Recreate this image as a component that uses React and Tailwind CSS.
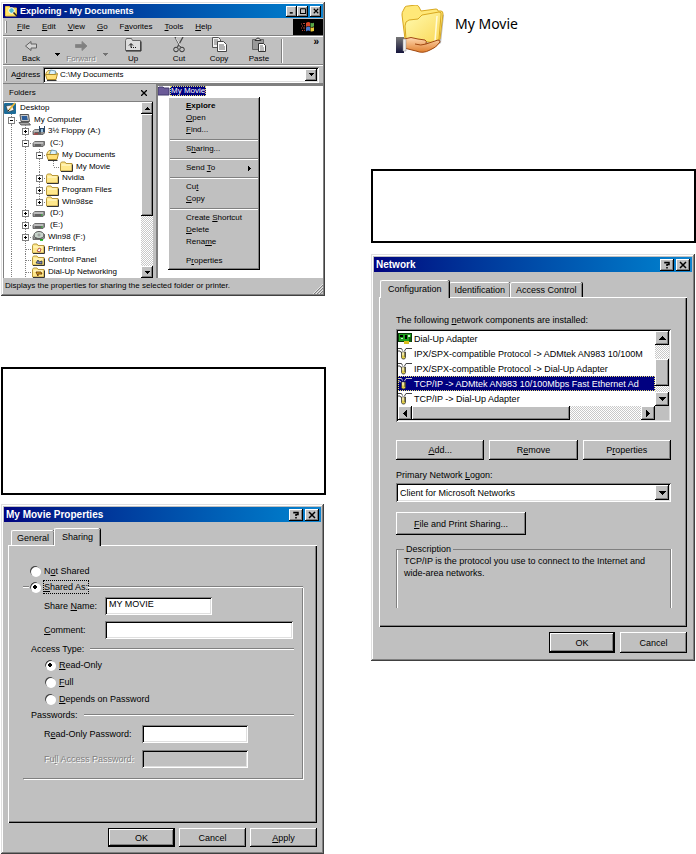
import { clsx } from 'clsx';

const raised = 'bg-[#c0c0c0] shadow-[inset_-1px_-1px_0_#000,inset_1px_1px_0_#fff,inset_-2px_-2px_0_#808080]';
const sunken = 'shadow-[inset_1px_1px_0_#808080,inset_-1px_-1px_0_#fff,inset_2px_2px_0_#000,inset_-2px_-2px_0_#dfdfdf]';
const checker = 'bg-[conic-gradient(#fff_25%,#c8c8c8_0_50%,#fff_0_75%,#c8c8c8_0)] bg-[length:2px_2px]';

// "&File" -> underlined F
function Mnemonic({ text }) {
  const i = text.indexOf('&');
  if (i < 0) return text;
  return (
    <>
      {text.slice(0, i)}
      <span className="underline">{text[i + 1]}</span>
      {text.slice(i + 2)}
    </>
  );
}

const arrowPaths = {
  up: 'M3 0h1v1h1v1h1v1h1v1H0V3h1V2h1V1h1z',
  down: 'M0 0h7v1H6v1H5v1H4v1H3V3H2V2H1V1H0z',
  left: 'M3 0h1v7H3V6H2V5H1V4H0V3h1V2h1V1h1z',
  right: 'M0 0h1v1h1v1h1v1h1v1H3v1H2v1H1v1H0z',
};

function Arrow({ dir = 'down' }) {
  const flat = dir === 'up' || dir === 'down';
  return (
    <svg width={flat ? 7 : 4} height={flat ? 4 : 7} shapeRendering="crispEdges" aria-hidden="true">
      <path d={arrowPaths[dir]} />
    </svg>
  );
}

function SmallArrow({ dir = 'down' }) {
  return (
    <svg width="5" height="5" viewBox="0 0 5 5" shapeRendering="crispEdges" aria-hidden="true">
      {dir === 'down' && <path d="M0 1h5v1H4v1H3v1H2V3H1V2H0z" />}
      {dir === 'up' && <path d="M2 1h1v1h1v1h1v1H0V3h1V2h1z" />}
      {dir === 'right' && <path d="M1 0h1v1h1v1h1v1H3v1H2v1H1z" />}
    </svg>
  );
}

function ScrollButton({ dir, small, className }) {
  return (
    <button type="button" aria-label={`Scroll ${dir}`} className={clsx('flex shrink-0 items-center justify-center', raised, className)}>
      {small ? <SmallArrow dir={dir} /> : <Arrow dir={dir} />}
    </button>
  );
}

function CaptionButton({ label, small, children }) {
  return (
    <button type="button" aria-label={label} className={clsx('flex items-center justify-center', raised, small ? 'size-[11px]' : 'h-3 w-3.5')}>
      <svg width={small ? 6 : 8} height={small ? 6 : 8} viewBox="0 0 8 8" fill="none" stroke="#000" aria-hidden="true">
        {children}
      </svg>
    </button>
  );
}

const closeGlyph = <path d="M1 1l6 6M7 1l-6 6" strokeWidth="1.5" />;

function DialogTitle({ children }) {
  return (
    <header className="flex h-[15px] items-center bg-linear-to-r from-[#000080] to-[#1084d0] px-0.5">
      <h2 className="flex-1 text-[10px] leading-none font-bold text-white">{children}</h2>
      <div className="flex gap-0.5">
        <CaptionButton label="Help">
          <path d="M2 2.500V1.500h4v2H4v1.500M4 6v1.500" strokeWidth="1.5" />
        </CaptionButton>
        <CaptionButton label="Close">{closeGlyph}</CaptionButton>
      </div>
    </header>
  );
}

function Button({ children, primary, className }) {
  return (
    <button type="button" className={clsx('flex items-center justify-center', raised, primary && 'border border-black', className)}>
      <span>
        <Mnemonic text={children} />
      </span>
    </button>
  );
}

function Tab({ children, active }) {
  return (
    <button
      type="button"
      role="tab"
      aria-selected={!!active}
      className={clsx(
        'rounded-t-xs border-t border-l border-white bg-[#c0c0c0] shadow-[inset_-1px_0_0_#808080,1px_0_0_#000]',
        active ? 'relative z-10 -mb-px h-[18px] px-[7px] pb-0.5' : 'h-[15px] px-[5px]',
      )}
    >
      {children}
    </button>
  );
}

const windowFrame =
  'bg-[#c0c0c0] shadow-[inset_-1px_-1px_0_#404040,inset_1px_1px_0_#dfdfdf,inset_-2px_-2px_0_#808080,inset_2px_2px_0_#fff]';
const tabPanel = 'border-t border-l border-white shadow-[inset_-1px_-1px_0_#000,inset_-2px_-2px_0_#808080]';

/* ---------- icons ---------- */

function FolderIcon({ mark }) {
  return (
    <svg width="13" height="11" viewBox="0 0 13 11" aria-hidden="true">
      <path d="M.5 2.500l1-1.500h3.500l1 1.500h6V10H.5z" fill="#ffe88c" stroke="#b8983c" />
      <path d="M1.500 4h9" stroke="#fffbd8" />
      <path d="M1 10.500h11.500V3.500" fill="none" stroke="#333" />
      {mark}
    </svg>
  );
}

function OpenFolderIcon() {
  return (
    <svg width="13" height="12" viewBox="0 0 13 12" aria-hidden="true">
      <path d="M1 4l2-2.500h3L7 3h4v3H1z" fill="#ffe88c" stroke="#b8983c" />
      <path d="M4 5l1.500-4 5 1-.5 4" fill="#d8f0fc" stroke="#5a8aa8" strokeWidth=".8" />
      <path d="M.5 5.500h10l2-1-1.500 6H2z" fill="#ffe078" stroke="#b08c28" />
      <path d="M2 11.500h9.500" stroke="#333" />
    </svg>
  );
}

function DriveIcon({ kind }) {
  return (
    <svg width="13" height="11" viewBox="0 0 13 11" aria-hidden="true">
      <path d="M1 5l2-1.500h9.500V7l-1.500 1.500H1z" fill="#909090" stroke="#555" strokeWidth=".8" />
      <path d="M1.500 5h9.500" stroke="#e8e8e8" />
      <path d="M3 7h6" stroke="#333" />
      {kind === 'hard' && <path d="M9 7h1.500" stroke="#0a0" />}
      {kind === 'floppy' && (
        <>
          <rect x="7" y="0" width="6" height="6" fill="#2c4868" />
          <rect x="8" y="0" width="4" height="2" fill="#fff" />
          <rect x="9" y="3" width="2" height="3" fill="#9cc4e0" />
          <path d="M2 8h4" stroke="#c33" />
        </>
      )}
      {kind === 'cd' && (
        <>
          <ellipse cx="7" cy="4" rx="5" ry="3.500" fill="#c8d4cc" stroke="#555" />
          <circle cx="7" cy="4" r="1" fill="#fff" stroke="#555" strokeWidth=".6" />
          <path d="M8 9h3" stroke="#0a0" strokeWidth="1.500" />
        </>
      )}
    </svg>
  );
}

function ComputerIcon() {
  return (
    <svg width="13" height="12" viewBox="0 0 13 12" aria-hidden="true">
      <path d="M2 .5h8.500l1 7H3z" fill="#c8c8c8" stroke="#555" />
      <path d="M3.500 2h5.500l.8 4H4.200z" fill="#2c5c98" />
      <path d="M1 8.500h9.500l2 2.500H3z" fill="#a8a8a8" stroke="#444" strokeWidth=".8" />
    </svg>
  );
}

function DesktopIcon() {
  return (
    <svg width="13" height="12" viewBox="0 0 13 12" aria-hidden="true">
      <rect y="1" width="12" height="11" rx="1" fill="#1c6c98" />
      <path d="M2 4l6-1 2 5-6 2z" fill="#f4f4f4" stroke="#222" strokeWidth=".5" />
      <path d="M5 8l6-7" stroke="#e8b838" strokeWidth="1.800" />
      <path d="M4 9l1.500-1.500" stroke="#222" />
    </svg>
  );
}

function ExploringIcon() {
  return (
    <svg width="13" height="12" viewBox="0 0 13 12" aria-hidden="true">
      <path d="M.5 1.500h4l1 1.500h6v8H.5z" fill="#ffe468" stroke="#e8c040" />
      <circle cx="6.500" cy="5.500" r="2.800" fill="#58b8c8" stroke="#fff" />
      <path d="M8.500 7.500l3.500 3.500" stroke="#222" strokeWidth="1.500" />
    </svg>
  );
}

function WindowsFlag() {
  return (
    <svg width="14" height="12" viewBox="0 0 14 12" aria-hidden="true">
      <path d="M5 2q2-1.500 4-.5V5.500q-2-1-4 .5z" fill="#d84828" />
      <path d="M9.500 1.800q1.500.7 3.500 0V5.500q-2 .8-3.500.2z" fill="#58a848" />
      <path d="M5 6.500q2-1.500 4-.5v4q-2-1-4 .5z" fill="#4878c8" />
      <path d="M9.500 6.300q1.500.7 3.500 0V10q-2 .8-3.500.2z" fill="#e8c838" />
      <path d="M0 3h1M2 2.500h2M1 5h1M3 4.800h1M0 7h1M2 7h2M1 9.500h1M3 9.300h1" stroke="#b04838" />
    </svg>
  );
}

const toolIcons = {
  Back: <path d="M4.500 9L10 4.500V7h5.500v4H10v2.500z" fill="#d4d4d4" stroke="#606060" />,
  Forward: <path d="M16 9l-5-4.500V7.500H4.500v3H11v3z" fill="#808080" stroke="#888" />,
  Up: (
    <>
      <path d="M2.500 3.500l1-2h5l1 2h8v10h-15z" fill="#ddd" stroke="#666" />
      <path d="M3 14h15V4.500" fill="none" stroke="#222" />
      <path d="M6 8.500l2-2 2 2M8 7v3.500h1M10 10.500h1M12 10.500h1" fill="none" stroke="#111" />
    </>
  ),
  Cut: (
    <>
      <path d="M6 0l5.500 10M14 0L8.500 10" stroke="#444" strokeWidth="1.300" fill="none" />
      <path d="M7 1l4.500 8" stroke="#eee" />
      <circle cx="7" cy="12.500" r="2.300" fill="none" stroke="#333" />
      <circle cx="13" cy="12.500" r="2.300" fill="none" stroke="#333" />
    </>
  ),
  Copy: (
    <>
      <path d="M3.500.5h6l2 2v8h-8z" fill="#f0f0f0" stroke="#555" />
      <path d="M5 3h4M5 5h5M5 7h4" stroke="#777" />
      <path d="M8.500 4.500h6l3 3v7h-9z" fill="#fff" stroke="#444" />
      <path d="M10 8h5M10 10h6M10 12h6" stroke="#666" />
    </>
  ),
  Paste: (
    <>
      <path d="M3.500 2.500h11v10h-11z" fill="#999" stroke="#666" />
      <path d="M6 3.500q3-5 6 0z" fill="#ddd" stroke="#333" />
      <path d="M9.500 6.500h5l2 2v6h-7z" fill="#fff" stroke="#333" />
      <path d="M11 9h3M11 11h4M11 13h4" stroke="#777" />
    </>
  ),
};

function AdapterIcon() {
  return (
    <svg width="14" height="13" viewBox="0 0 14 13" shapeRendering="crispEdges" aria-hidden="true">
      <rect y="1" width="14" height="9" fill="#083c08" />
      <rect x="1" y="2" width="12" height="7" fill="#20a020" />
      <path d="M2 3h3v2H2zM7 3h2v4H7z" fill="#000" />
      <path d="M3 6h2v1H3zM10 3h2v2h-2z" fill="#c8f0c8" />
      <path d="M6 9h5v3H6z" fill="#d8c020" />
      <path d="M11 5h2v5h-2z" fill="#106010" />
    </svg>
  );
}

function ProtocolIcon({ light }) {
  const wire = light ? '#c8c8c8' : '#444';
  return (
    <svg width="14" height="13" viewBox="0 0 14 13" aria-hidden="true">
      <path d="M0 1.500h3.500l1 2M14 1.500H8L6.500 4M0 4h2l1 1.500" fill="none" stroke={wire} />
      <path d="M3.500 5h4v5.500l-1 1.500h-2l-1-1.500z" fill="#e0cc48" stroke="#333" strokeWidth=".8" />
      <path d="M5 5v3.500" stroke="#fff" />
      <path d="M7 5v5" stroke="#444" />
    </svg>
  );
}

function SharedFolderIcon() {
  return (
    <svg width="50" height="48" viewBox="0 0 50 48" aria-hidden="true">
      <defs>
        <linearGradient id="folder" x1="0" y1="0" x2="1" y2="1">
          <stop offset="0" stopColor="#fffbb0" />
          <stop offset="1" stopColor="#fad858" />
        </linearGradient>
        <linearGradient id="hand" x1="0" y1="0" x2="0" y2="1">
          <stop offset="0" stopColor="#ffd8b0" />
          <stop offset="1" stopColor="#e08030" />
        </linearGradient>
        <linearGradient id="cuff" x1="0" y1="0" x2="0" y2="1">
          <stop offset="0" stopColor="#777" />
          <stop offset="1" stopColor="#15153c" />
        </linearGradient>
      </defs>
      <path d="M9 34L7 8l3-6 11-1 5 5 15-1 7 4-3 28-7 4z" fill="#555" opacity=".4" transform="translate(1 1)" />
      <path d="M10 34L7 10q0-3 1-4l2-4q1-1 3-1l8-1q2 0 3 2l2 4 15-2q2 0 2 2l3 0q2 0 2 3l-3 25-4 2z" fill="#ffe878" stroke="#d8a820" />
      <path d="M11 34l-1-13q0-5 4-6l9-1 4-4 17-3q3 0 2 3l-2 24q0 4-3 4z" fill="url(#folder)" stroke="#d8a820" />
      <path d="M42 11l-2 25" stroke="#fffbd8" strokeWidth="1.500" />
      <path d="M9 34q7-3 14 0l7 1q2 1 1 4l12-4q2 0 2 2-4 6-10 8-7 4-14 1l-12-3z" fill="url(#hand)" stroke="#a04810" />
      <path d="M20 39q6 2 11 0" fill="none" stroke="#a04810" />
      <path d="M1 32h8v16H1z" fill="url(#cuff)" />
      <path d="M8 34h3v12H8z" fill="#eee" stroke="#888" strokeWidth=".5" />
    </svg>
  );
}

/* ---------- explorer ---------- */

const printerMark = <path d="M5 8l2-3 2 1-1 3z" fill="#fff" stroke="#a33" strokeWidth=".8" />;
const panelMark = <path d="M4 8l2-3 1 2 3-1v3z" fill="#88b" stroke="#234" strokeWidth=".8" />;
const dialupMark = <path d="M4 5h5l1 2H6v2z" fill="#e0b020" stroke="#520" strokeWidth=".8" />;

// guides: one char per indent cell. | line, + closed, - open, x last closed, T branch, L last branch
const tree = [
  { name: 'Desktop', guides: '', icon: <DesktopIcon /> },
  { name: 'My Computer', guides: '-', icon: <ComputerIcon /> },
  { name: '3½ Floppy (A:)', guides: '|+', icon: <DriveIcon kind="floppy" /> },
  { name: '(C:)', guides: '|-', icon: <DriveIcon />, wide: true },
  { name: 'My Documents', guides: '||-', icon: <OpenFolderIcon /> },
  { name: 'My Movie', guides: '|||L', icon: <FolderIcon /> },
  { name: 'Nvidia', guides: '||+', icon: <FolderIcon /> },
  { name: 'Program Files', guides: '||+', icon: <FolderIcon /> },
  { name: 'Win98se', guides: '||x', icon: <FolderIcon /> },
  { name: '(D:)', guides: '|+', icon: <DriveIcon kind="hard" />, wide: true },
  { name: '(E:)', guides: '|+', icon: <DriveIcon kind="hard" />, wide: true },
  { name: 'Win98 (F:)', guides: '|+', icon: <DriveIcon kind="cd" /> },
  { name: 'Printers', guides: '|T', icon: <FolderIcon mark={printerMark} /> },
  { name: 'Control Panel', guides: '|T', icon: <FolderIcon mark={panelMark} /> },
  { name: 'Dial-Up Networking', guides: '|T', icon: <FolderIcon mark={dialupMark} /> },
];

function Guide({ type }) {
  const box = '+-x'.includes(type);
  const down = type !== 'L' && type !== 'x';
  return (
    <svg className="h-3 w-3.5 shrink-0" viewBox="0 0 14 12" shapeRendering="crispEdges" fill="none" aria-hidden="true">
      <path d={down ? 'M7.500 0v12' : 'M7.500 0v6'} stroke="#808080" strokeDasharray="1 1" />
      {type !== '|' && <path d="M8 6.500h6" stroke="#808080" strokeDasharray="1 1" />}
      {box && (
        <>
          <rect x="4.500" y="3.500" width="6" height="6" fill="#fff" stroke="#808080" />
          <path d={type === '-' ? 'M6 6.500h3' : 'M6 6.500h3M7.500 5v3'} stroke="#000" />
        </>
      )}
    </svg>
  );
}

const menus = ['&File', '&Edit', '&View', '&Go', 'F&avorites', '&Tools', '&Help'];

const contextMenu = [
  ['&Explore', '&Open', '&Find...'],
  ['S&haring...'],
  ['Send &To'],
  ['Cu&t', '&Copy'],
  ['Create &Shortcut', '&Delete', 'Rena&me'],
  ['P&roperties'],
];

function ContextMenu() {
  return (
    <div role="menu" className={clsx('absolute top-[11px] left-2.5 w-[92px] px-0.5 py-[3px]', raised)}>
      {contextMenu.map((group, g) => (
        <div
          key={group[0]}
          className={clsx(g > 0 && 'pt-[7px]', g > 0 && g < 5 && 'bg-[linear-gradient(#808080_50%,#fff_0)] bg-[length:100%_2px] bg-[position:0_3px] bg-no-repeat')}
        >
          {group.map((item) => (
            <button
              key={item}
              type="button"
              role="menuitem"
              className={clsx('flex h-3 w-full items-center pr-1.5 pl-4 text-left leading-3 whitespace-nowrap', item === '&Explore' && 'font-bold')}
            >
              <span className="flex-1">
                <Mnemonic text={item} />
              </span>
              {item === 'Send &To' && <SmallArrow dir="right" />}
            </button>
          ))}
        </div>
      ))}
    </div>
  );
}

function ToolButton({ name, disabled, className }) {
  return (
    <button
      type="button"
      disabled={disabled}
      className={clsx('flex flex-col items-center leading-3', disabled && 'text-[#808080] [text-shadow:1px_1px_0_#fff]', className)}
    >
      <svg width="20" height="16" viewBox="0 0 20 16" aria-hidden="true">
        {toolIcons[name]}
      </svg>
      {name}
    </button>
  );
}

function Explorer() {
  return (
    <section className={clsx('mr-px flex flex-col p-[2px] text-[8px] leading-3', windowFrame)}>
      <header className="flex h-3.5 items-center gap-0.5 bg-linear-to-r from-[#000080] to-[#1084d0] px-0.5">
        <ExploringIcon />
        <h1 className="flex-1 text-[9px] leading-none font-bold text-white">Exploring - My Documents</h1>
        <div className="flex">
          <CaptionButton small label="Minimize">
            <path d="M1 6.500h4" strokeWidth="2" />
          </CaptionButton>
          <CaptionButton small label="Maximize">
            <path d="M.5 1h7M.5 1v6.500h7V1" strokeWidth="1.500" />
          </CaptionButton>
          <div className="ml-0.5">
            <CaptionButton small label="Close">{closeGlyph}</CaptionButton>
          </div>
        </div>
      </header>

      <nav className="flex h-[18px] items-center border-b border-[#808080] pl-0.5">
        <span className="mr-2.5 h-3 w-0.5 border-r border-l border-r-[#808080] border-l-white" />
        <div className="flex flex-1 gap-3">
          {menus.map((m) => (
            <button key={m} type="button">
              <Mnemonic text={m} />
            </button>
          ))}
        </div>
        <span className="flex h-4 w-[30px] items-center justify-center bg-black">
          <WindowsFlag />
        </span>
      </nav>

      <div className="flex h-[29px] items-center border-t border-b border-t-white border-b-[#808080] pl-0.5">
        <span className="mr-1.5 h-6 w-0.5 border-r border-l border-r-[#808080] border-l-white" />
        <ToolButton name="Back" className="w-9" />
        <span className="w-4 pt-2 pl-1.5">
          <SmallArrow />
        </span>
        <ToolButton name="Forward" disabled className="w-8" />
        <span className="w-3 pt-2 pl-1.5 opacity-40">
          <SmallArrow />
        </span>
        <ToolButton name="Up" className="w-12" />
        <ToolButton name="Cut" className="w-11" />
        <ToolButton name="Copy" className="w-9" />
        <ToolButton name="Paste" className="w-11" />
        <span className="h-6 w-0.5 border-r border-l border-r-white border-l-[#808080]" />
        <span className="mr-1 ml-auto self-start text-[10px] leading-[10px] font-bold">»</span>
      </div>

      <div className="flex h-[18px] items-center border-t border-white pr-1 pl-0.5">
        <span className="mr-1 h-3 w-0.5 border-r border-l border-r-[#808080] border-l-white" />
        <label htmlFor="address" className="w-8">
          <Mnemonic text="A&ddress" />
        </label>
        <div className={clsx('flex h-4 flex-1 items-center bg-white p-[2px]', sunken)}>
          <OpenFolderIcon />
          <select id="address" className="min-w-0 flex-1 appearance-none bg-transparent pl-0.5">
            <option>C:\My Documents</option>
          </select>
          <span className={clsx('flex h-3 w-3 items-center justify-center', raised)}>
            <SmallArrow />
          </span>
        </div>
      </div>

      <div className="flex border-t border-[#808080]">
        <div className="flex w-[150px] flex-col">
          <div className="flex h-[17px] items-center px-1.5">
            <span className="flex-1">Folders</span>
            <button type="button" aria-label="Close folders">
              <svg width="6" height="6" viewBox="0 0 6 6" stroke="#000" strokeWidth="1.300" aria-hidden="true">
                <path d="M0 0l6 6M6 0L0 6" />
              </svg>
            </button>
          </div>
          <div className="flex h-[177px] border-t border-l border-[#808080] bg-white">
            <ul className="flex min-w-0 flex-1 flex-col overflow-hidden">
              {tree.map((row) => (
                <li key={row.name} className="flex min-h-0 flex-1 items-center whitespace-nowrap">
                  {[...row.guides].map((g, i) => (
                    <Guide key={i} type={g} />
                  ))}
                  <span className="flex w-4 shrink-0">{row.icon}</span>
                  <span className={clsx(row.wide && 'pl-0.5')}>{row.name}</span>
                </li>
              ))}
            </ul>
            <div className={clsx('flex w-3 flex-col', checker)}>
              <ScrollButton small dir="up" className="h-3" />
              <div className={clsx('h-[102px]', raised)} />
              <ScrollButton small dir="down" className="mt-auto h-3" />
            </div>
          </div>
        </div>
        <div className="relative ml-[3px] flex-1 border-t-2 border-l-2 border-[#808080] bg-white">
          <div className="flex h-2.5 items-center">
            <svg width="12" height="10" viewBox="0 0 12 10" aria-hidden="true">
              <path d="M0 2l1-1h4l1 1h5v7H0z" fill="#6a5a98" stroke="#40386c" />
            </svg>
            <span className="bg-[#000080] px-px leading-[10px] text-white outline-1 -outline-offset-1 outline-[#e8e070] outline-dotted">
              My Movie
            </span>
          </div>
          <ContextMenu />
        </div>
      </div>

      <footer className="flex h-4 items-center pl-0.5">
        <p className="flex-1">Displays the properties for sharing the selected folder or printer.</p>
        <svg width="10" height="10" viewBox="0 0 10 10" className="self-end" aria-hidden="true">
          <path d="M1 10l9-9M4 10l6-6M7 10l3-3" stroke="#808080" />
          <path d="M0 10L10 0M3 10l7-7M6 10l4-4" stroke="#fff" strokeWidth=".6" />
        </svg>
      </footer>
    </section>
  );
}

/* ---------- sharing dialog ---------- */

function Radio({ name, label, checked, focus }) {
  return (
    <label className="flex h-4 items-center gap-1">
      <input
        type="radio"
        name={name}
        defaultChecked={checked}
        className="size-2.5 shrink-0 appearance-none rounded-full bg-white shadow-[inset_1px_1px_0_#404040,1px_1px_0_#fff] checked:bg-[radial-gradient(circle,#000_2px,#fff_2px)]"
      />
      <span className={clsx('leading-3', focus && 'outline-1 outline-black outline-dotted')}>
        <Mnemonic text={label} />
      </span>
    </label>
  );
}

function Field({ id, label, labelWidth, width, value, disabled }) {
  return (
    <div className="flex h-[18px] items-center pl-[21px]">
      <label htmlFor={id} className={clsx('whitespace-nowrap', labelWidth, disabled && 'text-[#808080] [text-shadow:1px_1px_0_#fff]')}>
        <Mnemonic text={label} />
      </label>
      <input
        id={id}
        type="text"
        defaultValue={value}
        disabled={disabled}
        className={clsx('h-[18px] px-1 pb-1', width, sunken, disabled ? 'bg-[#c0c0c0]' : 'bg-white')}
      />
    </div>
  );
}

function Divider({ children }) {
  return (
    <div className="flex h-4 items-center gap-1.5 px-2">
      <span>{children}</span>
      <span className="h-0.5 flex-1 border-t border-b border-t-[#808080] border-b-white" />
    </div>
  );
}

function SharingDialog() {
  return (
    <section className={clsx('mr-0.5 p-[3px] text-[9px] leading-3', windowFrame)}>
      <DialogTitle>My Movie Properties</DialogTitle>
      <div className="px-1 pt-1.5">
        <div role="tablist" className="flex items-end pl-[3px]">
          <Tab>General</Tab>
          <Tab active>Sharing</Tab>
        </div>
        <div className={clsx('px-3.5 pt-[17px] pb-[44px]', tabPanel)}>
          <div className="pl-[7px]">
            <Radio name="share" label="N&ot Shared" />
          </div>
          <div className="flex items-center">
            <span className="h-0.5 w-1.5 border-t border-b border-t-[#808080] border-b-white" />
            <div className="ml-px">
              <Radio name="share" label="&Shared As:" checked focus />
            </div>
            <span className="h-0.5 flex-1 border-t border-b border-t-[#808080] border-b-white" />
          </div>
          {/* the frame's top edge is the line beside "Shared As:" */}
          <div className="-mt-2 border-r border-b border-[#808080] pt-2.5 pb-2.5 shadow-[1px_1px_0_#fff]">
            <div className="mb-0.5 flex flex-col gap-1.5">
              <Field id="share-name" label="Share &Name:" labelWidth="w-[61px]" width="w-[107px]" value="MY MOVIE" />
              <Field id="comment" label="&Comment:" labelWidth="w-[61px]" width="w-[188px]" />
            </div>
            <Divider>Access Type:</Divider>
            <div className="flex flex-col gap-px pl-[22px]">
              <Radio name="access" label="&Read-Only" checked />
              <Radio name="access" label="&Full" />
              <Radio name="access" label="&Depends on Password" />
            </div>
            <Divider>Passwords:</Divider>
            <div className="mt-0.5 flex flex-col gap-[7px]">
              <Field id="ro-password" label="R&ead-Only Password:" labelWidth="w-[98px]" width="w-[106px]" />
              <Field id="full-password" label="Fu&ll Access Password:" labelWidth="w-[98px]" width="w-[106px]" disabled />
            </div>
          </div>
        </div>
        <div className="flex justify-end gap-1 pt-[5px] pb-1">
          <Button primary className="h-[19px] w-[67px]">OK</Button>
          <Button className="h-[19px] w-[67px]">Cancel</Button>
          <Button className="h-[19px] w-[67px]">&Apply</Button>
        </div>
      </div>
    </section>
  );
}

/* ---------- network dialog ---------- */

const components = [
  'Dial-Up Adapter',
  'IPX/SPX-compatible Protocol -> ADMtek AN983 10/100M',
  'IPX/SPX-compatible Protocol -> Dial-Up Adapter',
  'TCP/IP -> ADMtek AN983 10/100Mbps Fast Ethernet Ad',
  'TCP/IP -> Dial-Up Adapter',
];

function NetworkDialog() {
  return (
    <section className={clsx('mr-px p-[3px] text-[9px] leading-3', windowFrame)}>
      <DialogTitle>Network</DialogTitle>
      <div className="px-[5px] pt-2">
        <div role="tablist" className="flex items-end pl-px">
          <Tab active>Configuration</Tab>
          <Tab>Identification</Tab>
          <Tab>Access Control</Tab>
        </div>
        <div className={clsx('px-4 pt-4 pb-[19px]', tabPanel)}>
          <p className="h-[15px]">
            <Mnemonic text="The following &network components are installed:" />
          </p>
          <div className={clsx('flex h-[93px] bg-white p-[2px]', sunken)}>
            <div className="flex min-w-0 flex-1 flex-col">
              <ul role="listbox" className="flex-1 overflow-hidden whitespace-nowrap">
                {components.map((c, i) => (
                  <li
                    key={c}
                    role="option"
                    aria-selected={i === 3}
                    className={clsx('flex h-[15px] items-center gap-0.5', i === 3 && 'bg-[#000080] text-white outline-1 -outline-offset-1 outline-[#e8e070] outline-dotted')}
                  >
                    <span className="shrink-0">{i === 0 ? <AdapterIcon /> : <ProtocolIcon light={i === 3} />}</span>
                    {c}
                  </li>
                ))}
              </ul>
              <div className={clsx('flex h-3.5', checker)}>
                <ScrollButton dir="left" className="w-3.5" />
                <div className={clsx('w-[158px]', raised)} />
                <ScrollButton dir="right" className="ml-auto w-3.5" />
              </div>
            </div>
            <div className="flex w-3.5 flex-col bg-[#c0c0c0] pb-3.5">
              <div className={clsx('flex flex-1 flex-col', checker)}>
                <ScrollButton dir="up" className="h-3.5" />
                <div className={clsx('mt-auto h-[27px]', raised)} />
                <ScrollButton dir="down" className="mt-1.5 h-3.5" />
              </div>
            </div>
          </div>
          <div className="mt-[18px] grid grid-cols-3 gap-[5px]">
            <Button className="h-5">&Add...</Button>
            <Button className="h-5">R&emove</Button>
            <Button className="h-5">P&roperties</Button>
          </div>
          <label htmlFor="logon" className="mt-[9px] block h-3.5">
            <Mnemonic text="Primary Network &Logon:" />
          </label>
          <div className={clsx('flex h-[19px] items-center bg-white p-[2px]', sunken)}>
            <select id="logon" className="min-w-0 flex-1 appearance-none bg-transparent pl-0.5">
              <option>Client for Microsoft Networks</option>
            </select>
            <span className={clsx('flex h-[15px] w-3.5 items-center justify-center', raised)}>
              <Arrow />
            </span>
          </div>
          <Button className="mt-2.5 h-[23px] w-[130px]">&File and Print Sharing...</Button>
          {/* frame is open at the bottom */}
          <fieldset className="mt-2 h-[65px] border border-b-0 border-[#808080] px-[7px] shadow-[1px_0_0_#fff,inset_1px_0_0_#fff]">
            <legend className="px-0.5">Description</legend>
            <p>TCP/IP is the protocol you use to connect to the Internet and wide-area networks.</p>
          </fieldset>
        </div>
        <div className="flex justify-end gap-[5px] pt-[5px] pb-[5px]">
          <Button primary className="h-[21px] w-[66px]">OK</Button>
          <Button className="h-[21px] w-[67px]">Cancel</Button>
        </div>
      </div>
    </section>
  );
}

export default function App() {
  return (
    <main className="grid grid-cols-2 gap-[45px] bg-white pl-px font-['Liberation_Sans',sans-serif] text-black">
      <div className="flex flex-col pt-0.5">
        <Explorer />
        <div className="mt-[71px] mb-[9px] h-32 border-2 border-black" />
        <SharingDialog />
      </div>
      <div className="flex flex-col pt-[5px]">
        <div className="flex gap-2.5 pl-6">
          <SharedFolderIcon />
          <span className="pt-2.5 font-['Noto_Sans',sans-serif] text-[14px] leading-[18px]">My Movie</span>
        </div>
        <div className="mt-[116px] mb-[11px] h-[74px] border-2 border-black" />
        <NetworkDialog />
      </div>
    </main>
  );
}
